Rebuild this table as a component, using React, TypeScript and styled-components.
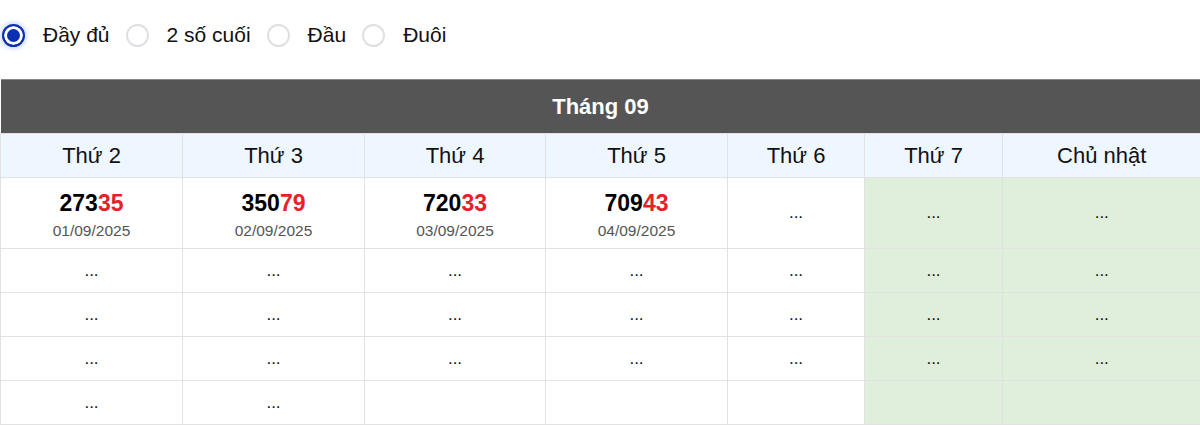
import React from 'react';
import styled, { createGlobalStyle } from 'styled-components';

const GlobalStyle = createGlobalStyle`
  body {
    margin: 0;
    font-family: "Liberation Sans", Arial, sans-serif;
    background: #fff;
    color: #111;
    overflow: hidden;
  }
`;

const Options = styled.div`
  display: flex;
  align-items: center;
  height: 70px;
  padding: 0 0 0 2px;
`;

const Option = styled.label`
  display: flex;
  align-items: center;
  gap: 18px;
  margin-right: 16px;
  font-size: 21px;
  color: #111;
  cursor: pointer;
`;

const Dot = styled.span<{ $on?: boolean }>`
  width: 23px;
  height: 23px;
  border-radius: 50%;
  box-sizing: border-box;
  border: ${(p) => (p.$on ? '2px solid #0b2fb0' : '2px solid #dfe0e3')};
  background: ${(p) => (p.$on ? '#0b2fb0' : '#fff')};
  box-shadow: ${(p) =>
    p.$on ? 'inset 0 0 0 3px #fff, 0 0 4px 2px rgba(60,110,255,0.25)' : 'none'};
`;

const Spacer = styled.div`
  height: 9px;
`;

const Table = styled.table`
  width: 1200px;
  border-collapse: collapse;
  table-layout: fixed;
`;

const Title = styled.th`
  background: #555555;
  border-top: 1px solid #888;
  color: #fff;
  font-size: 22px;
  font-weight: bold;
  height: 53px;
  padding: 0;
`;

const DayHead = styled.th`
  background: #eef6ff;
  border: 1px solid #e2e2e2;
  font-weight: normal;
  font-size: 22px;
  color: #111;
  height: 43px;
  padding: 0;
  &:last-child {
    border-right: none;
  }
`;

const Cell = styled.td<{ $weekend?: boolean; $tall?: boolean }>`
  background: ${(p) => (p.$weekend ? '#e0efdb' : '#fff')};
  border: 1px solid #e2e2e2;
  text-align: center;
  height: ${(p) => (p.$tall ? '70px' : '43px')};
  padding: 0;
  font-size: 17px;
  color: #111;
  &:last-child {
    border-right: none;
  }
`;

const Stack = styled.div`
  padding-top: 3px;
`;

const Number = styled.div`
  font-size: 23px;
  font-weight: bold;
  color: #000;
  line-height: 26px;
`;

const Tail = styled.span`
  color: #e8202a;
`;

const DateText = styled.div`
  font-size: 15.5px;
  line-height: 18px;
  color: #555;
  margin-top: 6px;
`;

const widths = [182, 182, 181, 182, 137, 138, 198];
const days = ['Thứ 2', 'Thứ 3', 'Thứ 4', 'Thứ 5', 'Thứ 6', 'Thứ 7', 'Chủ nhật'];

const results = [
  { head: '273', tail: '35', date: '01/09/2025' },
  { head: '350', tail: '79', date: '02/09/2025' },
  { head: '720', tail: '33', date: '03/09/2025' },
  { head: '709', tail: '43', date: '04/09/2025' },
];

// rows 2..5: how many cells carry "..."
const filled = [7, 7, 7, 2];

const App: React.FC = () => (
  <>
    <GlobalStyle />
    <Options>
      <Option>
        <Dot $on />
        Đầy đủ
      </Option>
      <Option>
        <Dot />
        2 số cuối
      </Option>
      <Option>
        <Dot />
        Đầu
      </Option>
      <Option>
        <Dot />
        Đuôi
      </Option>
    </Options>
    <Spacer />
    <Table>
      <colgroup>
        {widths.map((w, i) => (
          <col key={i} style={{ width: w }} />
        ))}
      </colgroup>
      <thead>
        <tr>
          <Title colSpan={7}>Tháng 09</Title>
        </tr>
        <tr>
          {days.map((d) => (
            <DayHead key={d}>{d}</DayHead>
          ))}
        </tr>
      </thead>
      <tbody>
        <tr>
          {days.map((d, i) => {
            const r = results[i];
            return (
              <Cell key={d} $tall $weekend={i >= 5}>
                {r ? (
                  <Stack>
                    <Number>
                      {r.head}
                      <Tail>{r.tail}</Tail>
                    </Number>
                    <DateText>{r.date}</DateText>
                  </Stack>
                ) : (
                  '...'
                )}
              </Cell>
            );
          })}
        </tr>
        {filled.map((n, row) => (
          <tr key={row}>
            {days.map((d, i) => (
              <Cell key={d} $weekend={i >= 5}>
                {i < n ? '...' : ''}
              </Cell>
            ))}
          </tr>
        ))}
      </tbody>
    </Table>
  </>
);

export default App;
